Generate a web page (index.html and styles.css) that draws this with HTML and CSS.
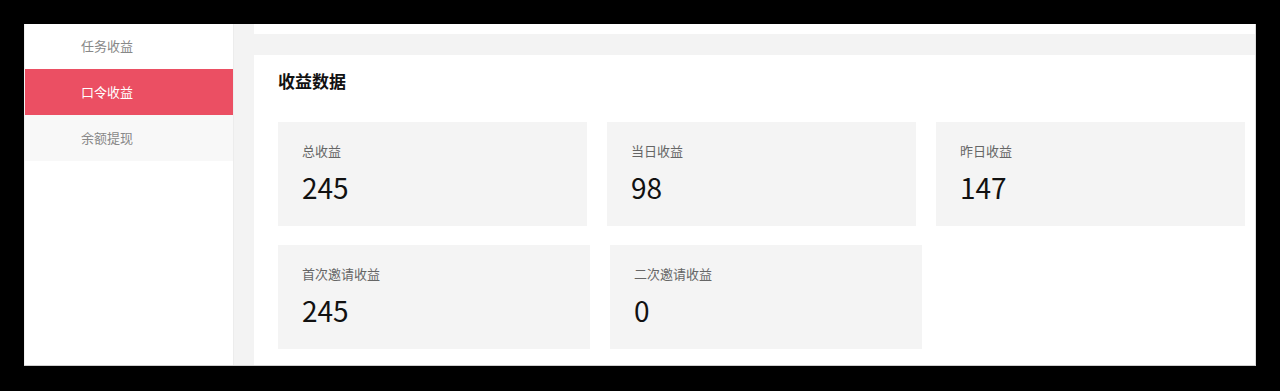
FILE: index.html
```html
<!DOCTYPE html>
<html lang="zh-CN">
<head>
  <meta charset="UTF-8" />
  <meta name="viewport" content="width=device-width, initial-scale=1.0"/>
  <title>收益数据</title>
  <link rel="stylesheet" href="styles.css">
</head>
<body>
  <div class="window">
    <div class="sidebar">
      <ul class="menu">
        <li class="menu-item">任务收益</li>
        <li class="menu-item active">口令收益</li>
        <li class="menu-item hover">余额提现</li>
      </ul>
    </div>

    <div class="main">
      <div class="card card-top"></div>

      <div class="card">
        <h2 class="card-title">收益数据</h2>
        <div class="stats stats-three">
          <div class="stat">
            <div class="stat-label">总收益</div>
            <div class="stat-value">245</div>
          </div>
          <div class="stat">
            <div class="stat-label">当日收益</div>
            <div class="stat-value">98</div>
          </div>
          <div class="stat">
            <div class="stat-label">昨日收益</div>
            <div class="stat-value">147</div>
          </div>
        </div>
        <div class="stats stats-two">
          <div class="stat">
            <div class="stat-label">首次邀请收益</div>
            <div class="stat-value">245</div>
          </div>
          <div class="stat">
            <div class="stat-label">二次邀请收益</div>
            <div class="stat-value">0</div>
          </div>
        </div>
      </div>
    </div>
  </div>
</body>
</html>
```

FILE: styles.css
```css
html, body {
  height: 100%;
}

body {
  margin: 0;
  padding: 24px 24px 25px 24px;
  box-sizing: border-box;
  background-color: #000;
  font-family: "Noto Sans CJK SC", "Microsoft YaHei", sans-serif;
}

.window {
  display: flex;
  height: 342px;
  overflow: hidden;
  background-color: #fff;
  border-bottom: 1px solid #cfcfcf;
  border-right: 1px solid #dcdcdc;
  box-sizing: border-box;
}

/* sidebar */
.sidebar {
  width: 210px;
  flex-shrink: 0;
  background-color: #fff;
  border-left: 1px solid #f0f0f0;
  border-right: 1px solid #ececec;
  box-sizing: border-box;
}

.menu {
  list-style: none;
  margin: -1px 0 0 0;
  padding: 0;
}

.menu-item {
  height: 46px;
  line-height: 45px;
  padding-left: 56px;
  font-size: 13px;
  color: #888;
}

.menu-item.active {
  background-color: #eb4f63;
  color: #fff;
}

.menu-item.hover {
  background-color: #f8f8f8;
}

/* main */
.main {
  flex: 1;
  background-color: #f3f3f3;
  padding-left: 20px;
}

.card {
  background-color: #fff;
  padding: 14px 24px 0 24px;
  height: 100%;
}

.card-top {
  height: 10px;
  padding: 0;
  margin-bottom: 21px;
}

.card-title {
  margin: 0 0 29px 0;
  font-size: 17px;
  line-height: 24px;
  font-weight: bold;
  color: #111;
}

.stats {
  display: grid;
  gap: 20px;
}

.stats-three {
  grid-template-columns: repeat(3, 309px);
  margin-bottom: 19px;
}

.stats-two {
  grid-template-columns: repeat(2, 312px);
}

.stat {
  height: 104px;
  box-sizing: border-box;
  padding: 19px 24px 0 24px;
  background-color: #f4f4f4;
}

.stat-label {
  font-size: 13px;
  line-height: 20px;
  color: #666;
  margin-bottom: 6px;
}

.stat-value {
  font-size: 28px;
  line-height: 40px;
  color: #111;
}
```
